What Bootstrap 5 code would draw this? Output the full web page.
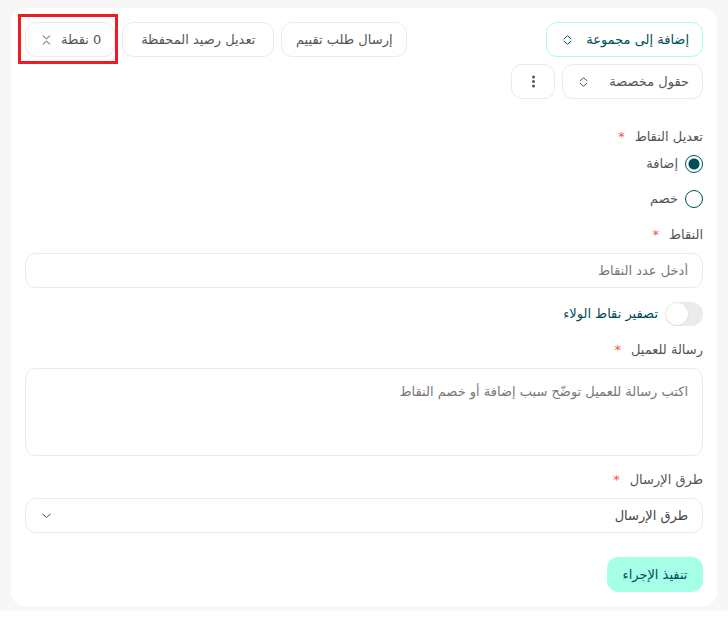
<!DOCTYPE html>
<html lang="ar" dir="rtl">
<head>
<meta charset="utf-8">
<meta name="viewport" content="width=device-width, initial-scale=1">
<title>تعديل النقاط</title>
<link href="https://cdn.jsdelivr.net/npm/bootstrap@5.3.0/dist/css/bootstrap.min.css" rel="stylesheet">
<style>
  :root { --ink: #555; --line: #ebebeb; --teal: #004d5a; --mint: #a5ffe6; --gap: 7px; }
  body { font-family: "DejaVu Sans", sans-serif; font-size: 13px; line-height: 22px; color: var(--ink); background: #fff; }
  .page-area { background: #f7f7f7; padding: 8px 11px 5px; }
  .panel { background: #fff; border-radius: 14px; padding: 14px; }
  .tools { margin-bottom: 27px; }
  .tools, .tool-set { gap: var(--gap); }
  .btn-tool { --bs-btn-color: var(--ink); --bs-btn-border-color: var(--line); --bs-btn-bg: #fff; --bs-btn-hover-border-color: var(--mint); }
  .btn-group-add { --bs-btn-color: var(--teal); --bs-btn-border-color: var(--mint); min-width: 157px; }
  .btn-fields { min-width: 141px; }
  .btn-review { min-width: 126px; }
  .btn-wallet { min-width: 152px; }
  .btn-run { --bs-btn-color: var(--teal); --bs-btn-bg: var(--mint); --bs-btn-border-color: var(--mint); --bs-btn-hover-bg: #8df5d8; margin-top: 24px; min-width: 96px; }
  .btn-tool, .btn-run { height: 35px; border-radius: 11px; padding: 0 13px; font-size: 13px; line-height: 22px; white-space: nowrap; }
  .btn-tool svg { margin-inline: 10px 3px; }
  .btn-more { width: 44px; padding: 0; }
  .btn-more svg { margin: 0; }
  .highlight { inset: -8px -3px -7px -7px; border: 3px solid #ed1c24; pointer-events: none; }
  .field-title { display: block; margin: 13px 0 7px; font-size: 13px; line-height: 22px; }
  .choice-title { margin: 0 0 4px; }
  .need { color: #f55157; margin-inline-start: 10px; }
  .choices { gap: 11px; }
  .choice { gap: 7px; height: 24px; }
  .choice .form-check-input { width: 18px; height: 18px; border-color: var(--teal); background-color: #fff; }
  .choice .form-check-input:checked { background-image: radial-gradient(circle, var(--teal) 5px, transparent 6px); }
  .field-box, .field-box:focus { border-color: var(--line); border-radius: 11px; padding: 5px 14px; font-size: 13px; line-height: 23px; color: #444; }
  .field-box { height: 35px; }
  .field-box::placeholder { color: #777; }
  .message-box { height: 88px; padding-top: 11px; resize: none; }
  .pick { background-position: left 16px center; background-size: 9px 9px; background-image: url("data:image/svg+xml,%3csvg xmlns='http://www.w3.org/2000/svg' viewBox='0 0 9 9'%3e%3cpath fill='none' stroke='%23444' d='M.5 3l4 3.500 4-3.500'/%3e%3c/svg%3e"); }
  .toggle-line { gap: 7px; margin-top: 14px; height: 24px; color: var(--teal); }
  .toggle-line .form-check-input { width: 38px; height: 24px; border: 0; background-color: #ebebeb; background-size: 24px 24px; background-position: left center; background-image: url("data:image/svg+xml,%3csvg xmlns='http://www.w3.org/2000/svg' viewBox='0 0 24 24'%3e%3ccircle cx='12' cy='12.5' r='11.5' fill='%23ddd'/%3e%3ccircle cx='12' cy='12' r='11' fill='%23fff'/%3e%3c/svg%3e"); }
  .toggle-line .form-check-input:checked { background-color: var(--mint); background-position: right center; }
</style>
<script src="https://cdn.jsdelivr.net/npm/bootstrap@5.3.0/dist/js/bootstrap.bundle.min.js" defer></script>
</head>
<body>
<main class="page-area">
  <form class="panel">
    <div class="tools d-flex align-items-start">
      <div class="tool-set d-flex flex-wrap flex-fill">
        <button type="button" class="btn btn-tool btn-group-add d-flex align-items-center justify-content-between">إضافة إلى مجموعة<svg width="9" height="10" viewBox="0 0 9 10" fill="none" stroke="currentColor" aria-hidden="true"><path d="M.8 4l3.700-3.300L8.200 4M.8 6l3.700 3.300L8.200 6"/></svg></button>
        <button type="button" class="btn btn-tool btn-fields d-flex align-items-center justify-content-between">حقول مخصصة<svg width="9" height="10" viewBox="0 0 9 10" fill="none" stroke="currentColor" aria-hidden="true"><path d="M.8 4l3.700-3.300L8.200 4M.8 6l3.700 3.300L8.200 6"/></svg></button>
        <button type="button" class="btn btn-tool btn-more d-flex align-items-center justify-content-center" aria-label="المزيد"><svg width="3" height="13" viewBox="0 0 3 13" fill="currentColor" aria-hidden="true"><circle cx="1.5" cy="2" r="1.5"/><circle cx="1.5" cy="6.5" r="1.5"/><circle cx="1.5" cy="11" r="1.5"/></svg></button>
      </div>
      <div class="tool-set d-flex flex-shrink-0">
        <button type="button" class="btn btn-tool btn-review">إرسال طلب تقييم</button>
        <button type="button" class="btn btn-tool btn-wallet">تعديل رصيد المحفظة</button>
        <div class="position-relative">
          <button type="button" class="btn btn-tool d-flex align-items-center">0 نقطة<svg width="9" height="10" viewBox="0 0 9 10" fill="none" stroke="currentColor" aria-hidden="true"><path d="M.8.500l3.700 3.300L8.200.500M.8 9.500l3.700-3.300 3.700 3.300"/></svg></button>
          <span class="highlight position-absolute"></span>
        </div>
      </div>
    </div>

    <div role="radiogroup" aria-labelledby="modeTitle">
      <div class="field-title choice-title" id="modeTitle">تعديل النقاط<span class="need">*</span></div>
      <div class="choices d-flex flex-column">
        <div class="choice d-flex align-items-center">
          <input class="form-check-input m-0" type="radio" name="mode" id="modeAdd" checked>
          <label for="modeAdd">إضافة</label>
        </div>
        <div class="choice d-flex align-items-center">
          <input class="form-check-input m-0" type="radio" name="mode" id="modeCut">
          <label for="modeCut">خصم</label>
        </div>
      </div>
    </div>

    <label class="field-title" for="points">النقاط<span class="need">*</span></label>
    <input class="form-control field-box" type="text" inputmode="numeric" id="points" placeholder="أدخل عدد النقاط">

    <div class="toggle-line form-switch d-flex align-items-center p-0">
      <input class="form-check-input m-0" type="checkbox" role="switch" id="reset">
      <label for="reset">تصفير نقاط الولاء</label>
    </div>

    <label class="field-title" for="message">رسالة للعميل<span class="need">*</span></label>
    <textarea class="form-control field-box message-box" id="message" placeholder="اكتب رسالة للعميل توضّح سبب إضافة أو خصم النقاط"></textarea>

    <label class="field-title" for="channel">طرق الإرسال<span class="need">*</span></label>
    <select class="form-select field-box pick" id="channel"><option>طرق الإرسال</option></select>

    <button type="submit" class="btn btn-run d-block">تنفيذ الإجراء</button>
  </form>
</main>
</body>
</html>
